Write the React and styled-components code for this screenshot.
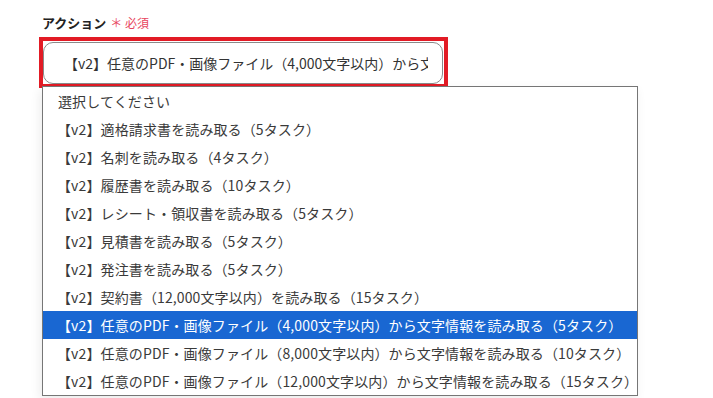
import React from "react";
import styled, {createGlobalStyle} from "styled-components";

const GlobalStyle = createGlobalStyle`
  html, body {
    margin: 0;
    background: #fff;
    font-family: "Noto Sans CJK JP", "Noto Sans", sans-serif;
  }
`;

const Page = styled.div`
  padding: 13px 0 0 42px;
  height: 398px;
  box-sizing: border-box;
  overflow: hidden;
`;

const Field = styled.div`
  position: relative;
  width: 596px;
`;

const LabelRow = styled.div`
  display: flex;
  align-items: baseline;
  gap: 4px;
  height: 20px;
  margin-bottom: 4px;
`;

const Label = styled.span`
  font-size: 13px;
  font-weight: 700;
  color: #222;
`;

const Required = styled.span`
  font-size: 12px;
  color: #e8455e;
`;

const Frame = styled.div`
  margin-left: -3px;
  width: 401px;
  height: 43px;
  border: 4px solid #e21b25;
`;

const Select = styled.div`
  box-sizing: border-box;
  width: 400px;
  height: 42px;
  margin-top: 1px;
  border: 1px solid #8a8a8a;
  border-radius: 10px;
  padding: 0 14px 0 20px;
  display: flex;
  align-items: center;
  overflow: hidden;
`;

const Value = styled.span`
  font-size: 14px;
  color: #333;
  white-space: nowrap;
  overflow: hidden;
`;

const Popup = styled.ul`
  position: absolute;
  top: 73px;
  left: 0;
  width: 596px;
  box-sizing: border-box;
  margin: 0;
  padding: 0;
  list-style: none;
  background: #fff;
  border: 1px solid #767676;
  box-shadow: -2px 4px 10px rgba(0, 0, 0, 0.08);
`;

const Option = styled.li`
  height: 28px;
  display: flex;
  align-items: center;
  padding-left: ${(p) => (p.$placeholder ? "15px" : "14px")};
  font-size: 14px;
  letter-spacing: 0.12px;
  white-space: nowrap;
  color: ${(p) => (p.$active ? "#fff" : "#3a3a3a")};
  background: ${(p) => (p.$active ? "#1967d2" : "transparent")};
`;

const options = [
    "【v2】適格請求書を読み取る（5タスク）",
    "【v2】名刺を読み取る（4タスク）",
    "【v2】履歴書を読み取る（10タスク）",
    "【v2】レシート・領収書を読み取る（5タスク）",
    "【v2】見積書を読み取る（5タスク）",
    "【v2】発注書を読み取る（5タスク）",
    "【v2】契約書（12,000文字以内）を読み取る（15タスク）",
    "【v2】任意のPDF・画像ファイル（4,000文字以内）から文字情報を読み取る（5タスク）",
    "【v2】任意のPDF・画像ファイル（8,000文字以内）から文字情報を読み取る（10タスク）",
    "【v2】任意のPDF・画像ファイル（12,000文字以内）から文字情報を読み取る（15タスク）",
];

const selected = 7;

export default function App() {
    return (
        <>
            <GlobalStyle/>
            <Page>
                <Field>
                    <LabelRow>
                        <Label>アクション</Label>
                        <Required>＊ 必須</Required>
                    </LabelRow>
                    <Frame>
                        <Select>
                            <Value>{options[selected]}</Value>
                        </Select>
                    </Frame>
                    <Popup>
                        <Option $placeholder>選択してください</Option>
                        {options.map((o, i) => (
                            <Option key={o} $active={i === selected}>{o}</Option>
                        ))}
                    </Popup>
                </Field>
            </Page>
        </>
    );
}
